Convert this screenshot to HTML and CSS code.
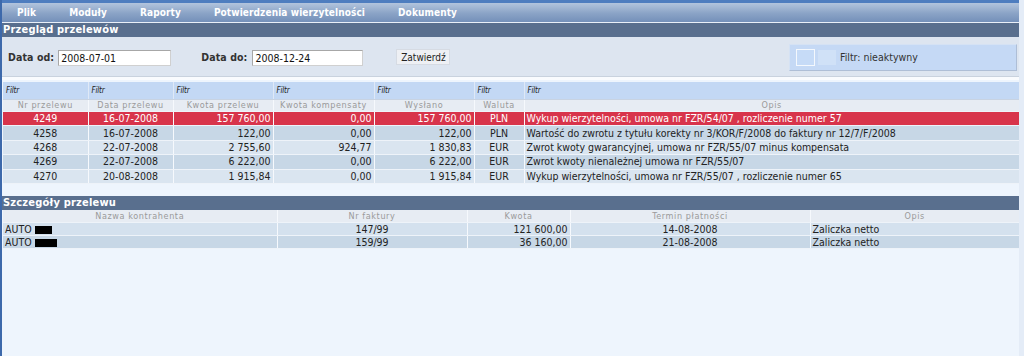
FILE: index.html
```html
<!DOCTYPE html>
<html lang="pl">
<head>
<meta charset="utf-8">
<title>Przegląd przelewów</title>
<link rel="stylesheet" href="styles.css">
</head>
<body>
<div class="app">
  <nav class="menu">
    <span class="menu-item">Plik</span>
    <span class="menu-item">Moduły</span>
    <span class="menu-item">Raporty</span>
    <span class="menu-item">Potwierdzenia wierzytelności</span>
    <span class="menu-item">Dokumenty</span>
  </nav>

  <div class="section-title">Przegląd przelewów</div>
  <div class="filters">
    <label class="lbl">Data od:</label>
    <input class="date-input" type="text" value="2008-07-01">
    <label class="lbl lbl-do">Data do:</label>
    <input class="date-input date-to" type="text" value="2008-12-24">
    <button class="btn" type="button">Zatwierdź</button>
    <div class="filter-state">
      <span class="sq sq-a"></span>
      <span class="sq sq-b"></span>
      <span class="filter-text">Filtr: nieaktywny</span>
    </div>
  </div>
  <div class="divider"></div>

  <table class="grid main">
    <colgroup>
      <col class="c85"><col class="c85"><col class="c100"><col class="c101"><col class="c100"><col class="c50"><col>
    </colgroup>
    <tr class="filter-row">
      <td>Filtr</td><td>Filtr</td><td>Filtr</td><td>Filtr</td><td>Filtr</td><td>Filtr</td><td>Filtr</td>
    </tr>
    <tr class="head-row">
      <th>Nr przelewu</th><th>Data przelewu</th><th>Kwota przelewu</th><th>Kwota kompensaty</th><th>Wysłano</th><th>Waluta</th><th>Opis</th>
    </tr>
    <tr class="row sel">
      <td class="ctr">4249</td><td class="ctr">16-07-2008</td><td class="num">157 760,00</td><td class="num">0,00</td><td class="num">157 760,00</td><td class="ctr">PLN</td><td class="txt">Wykup wierzytelności, umowa nr FZR/54/07 , rozliczenie numer 57</td>
    </tr>
    <tr class="row dark">
      <td class="ctr">4258</td><td class="ctr">16-07-2008</td><td class="num">122,00</td><td class="num">0,00</td><td class="num">122,00</td><td class="ctr">PLN</td><td class="txt">Wartość do zwrotu z tytułu korekty nr 3/KOR/F/2008 do faktury nr 12/7/F/2008</td>
    </tr>
    <tr class="row light">
      <td class="ctr">4268</td><td class="ctr">22-07-2008</td><td class="num">2 755,60</td><td class="num">924,77</td><td class="num">1 830,83</td><td class="ctr">EUR</td><td class="txt">Zwrot kwoty gwarancyjnej, umowa nr FZR/55/07 minus kompensata</td>
    </tr>
    <tr class="row dark">
      <td class="ctr">4269</td><td class="ctr">22-07-2008</td><td class="num">6 222,00</td><td class="num">0,00</td><td class="num">6 222,00</td><td class="ctr">EUR</td><td class="txt">Zwrot kwoty nienależnej umowa nr FZR/55/07</td>
    </tr>
    <tr class="row light">
      <td class="ctr">4270</td><td class="ctr">20-08-2008</td><td class="num">1 915,84</td><td class="num">0,00</td><td class="num">1 915,84</td><td class="ctr">EUR</td><td class="txt">Wykup wierzytelności, umowa nr FZR/55/07 , rozliczenie numer 65</td>
    </tr>
  </table>

  <div class="section-title detail-title">Szczegóły przelewu</div>
  <table class="grid detail">
    <colgroup>
      <col class="d274"><col class="d190"><col class="d103"><col class="d240"><col>
    </colgroup>
    <tr class="head-row">
      <th>Nazwa kontrahenta</th><th>Nr faktury</th><th>Kwota</th><th>Termin płatności</th><th>Opis</th>
    </tr>
    <tr class="row light2">
      <td class="txt">AUTO <span class="redact r1"></span></td><td class="ctr">147/99</td><td class="num">121 600,00</td><td class="ctr">14-08-2008</td><td class="txt">Zaliczka netto</td>
    </tr>
    <tr class="row dark">
      <td class="txt">AUTO <span class="redact r2"></span></td><td class="ctr">159/99</td><td class="num">36 160,00</td><td class="ctr">21-08-2008</td><td class="txt">Zaliczka netto</td>
    </tr>
  </table>
</div>
</body>
</html>
```

FILE: styles.css
```css
html, body {
  margin: 0;
  padding: 0;
}
body {
  background: #f2f7fd;
  font-family: "DejaVu Sans Condensed", "DejaVu Sans", "Liberation Sans", sans-serif;
  font-stretch: condensed;
  font-size: 10px;
  color: #222;
}
.app {
  width: 1017px;
  min-height: 356px;
  border-left: 2px solid #3d69ab;
  border-right: 5px solid #e4ecf7;
  background: #eef5fd;
}

/* menu */
.menu {
  height: 19px;
  border-top: 3px solid #4e7dbf;
  border-bottom: 1px solid #e9eff8;
  background: linear-gradient(#b2c4dd, #8aa3c6 55%, #7490b9);
  display: flex;
  align-items: center;
  gap: 33px;
  padding-left: 15px;
}
.menu-item {
  color: #fff;
  font-weight: bold;
  font-size: 10px;
  letter-spacing: 0.1px;
}

/* section titles */
.section-title {
  height: 14px;
  line-height: 14px;
  background: #596f8e;
  color: #fff;
  font-weight: bold;
  font-size: 11px;
  padding-left: 1px;
  letter-spacing: 0.2px;
}
.detail-title {
  margin-top: 12px;
}

/* filters */
.filters {
  height: 39px;
  background: #dde5f0;
  border-bottom: 1px solid #c9d2de;
  display: flex;
  align-items: center;
}
.lbl {
  font-weight: bold;
  font-size: 10.5px;
  color: #333;
  margin-left: 6px;
  margin-right: 4px;
  letter-spacing: 0.1px;
}
.lbl-do {
  margin-left: 30px;
  margin-right: 5px;
}
.date-input {
  width: 107px;
  height: 14px;
  padding: 0 2px;
  border: 1px solid #a7a7a7;
  border-right-color: #d0d0d0;
  border-bottom-color: #d0d0d0;
  background: #fff;
  font-family: inherit;
  font-size: 10.5px;
  color: #111;
  margin-top: 2px;
}
.date-to {
  width: 105px;
}
.btn {
  margin-left: 33px;
  width: 54px;
  height: 16px;
  padding: 0;
  border: 1px solid #d6dbe3;
  background: #eef0f4;
  font-family: inherit;
  font-size: 10px;
  color: #222;
  margin-top: 1px;
}
.filter-state {
  margin-left: auto;
  margin-right: 2px;
  margin-top: 1px;
  width: 226px;
  height: 25px;
  background: #c5d9f5;
  border: 1px solid #d5e2f4;
  border-right-color: #aebed6;
  border-bottom-color: #aebed6;
  display: flex;
  align-items: center;
}
.sq {
  width: 17px;
  height: 15px;
  background: #c6dbf7;
}
.sq-a {
  margin-left: 6px;
  border: 1px solid #f4f8fd;
}
.sq-b {
  margin-left: 3px;
  width: 18px;
  background: #d0e1f7;
}
.filter-text {
  margin-left: 4px;
  font-size: 10.5px;
  color: #333;
}

.divider {
  height: 3px;
  background: #f9fbfe;
  margin-bottom: 2px;
}

/* tables */
.grid {
  table-layout: fixed;
  border-collapse: collapse;
  width: 1016px;
  margin-left: 1px;
}
.c85 { width: 85px; }
.c100 { width: 100px; }
.c101 { width: 101px; }
.c50 { width: 50px; }
.d274 { width: 274px; }
.d190 { width: 190px; }
.d103 { width: 103px; }
.d240 { width: 240px; }

.grid td, .grid th {
  padding: 0 2px;
  white-space: nowrap;
  overflow: hidden;
  border-left: 1px solid #f6f9fd;
  border-bottom: 1px solid #eef3f9;
}
.grid td:first-child, .grid th:first-child {
  border-left: none;
}
.filter-row td {
  height: 17px;
  background: #c3d8f4;
  font-style: italic;
  font-size: 8px;
  color: #222;
  letter-spacing: -0.2px;
  border-left-color: #dfe9f7;
  border-bottom: 1px solid #c8d3e2;
  padding-left: 3px;
}
.head-row th {
  height: 11px;
  line-height: 11px;
  background: #e7ecf3;
  font-weight: normal;
  font-size: 9px;
  color: #9a9a9a;
  text-align: center;
  letter-spacing: 0.6px;
}
.detail .head-row th {
  height: 12px;
  line-height: 12px;
}
.row td {
  height: 13.4px;
  line-height: 13px;
  font-size: 10.5px;
}
.detail .row td {
  height: 12px;
  line-height: 12px;
}
.ctr { text-align: center; }
.num { text-align: right; }
.grid td.txt { text-align: left; padding-left: 2px; }

.sel td {
  background: #d8344b;
  color: #fff;
}
.dark td { background: #c7d7e6; }
.light td { background: #dae5f0; }
.light2 td { background: #d4e1ee; }

.redact {
  display: inline-block;
  height: 8px;
  background: #000;
  vertical-align: -1px;
}
.r1 { width: 17px; }
.r2 { width: 22px; }
```
